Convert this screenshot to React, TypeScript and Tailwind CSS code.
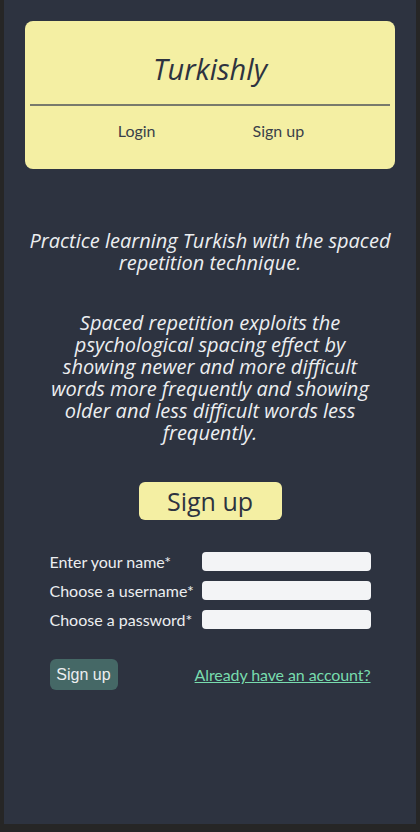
const Header = () => (
  <div className="flex h-[148px] flex-col rounded-lg bg-[#f4efa3] px-[5px]">
    <h1 className="mt-[28px] h-[40px] text-center font-['Open_Sans'] text-[29px] leading-[40px] italic text-[#2d3340]">
      Turkishly
    </h1>
    <div className="mt-[15px] h-[2px] bg-[#787a6c]" />
    <nav className="mt-[15px] flex justify-center gap-[97px] pl-[2px] font-['Lato'] text-[16px] leading-[20px] text-[#3a3f4a]">
      <a>Login</a>
      <a>Sign up</a>
    </nav>
  </div>
)

const Field = ({label, type}: {label: string; type: string}) => (
  <div className="flex h-[29px] items-center">
    <label className="w-[153px] font-['Lato'] text-[16px] text-[#eceef0]">{label}</label>
    <input type={type} className="h-[19px] w-[169px] rounded-[4px] bg-[#f3f4f6] outline-none" />
  </div>
)

export default function App() {
  return (
    <div className="h-[832px] bg-[#262626] px-[4px] pb-[8px]">
      <div className="flex h-full flex-col bg-[#2d3340] px-[21px] pt-[21px]">
        <Header />

        <p className="mt-[61px] text-center font-['Open_Sans'] text-[20px] leading-[22px] italic text-[#eceef0]">
          Practice learning Turkish with the spaced repetition technique.
        </p>
        <p className="mx-[22px] mt-[38px] text-center font-['Open_Sans'] text-[20px] leading-[22px] italic text-[#eceef0]">
          Spaced repetition exploits the psychological spacing effect by showing newer and more difficult words more
          frequently and showing older and less difficult words less frequently.
        </p>

        <div className="mt-[38px] flex justify-center">
          <button className="h-[38px] w-[143px] rounded-md bg-[#f4efa3] font-['Open_Sans'] text-[25px] leading-[38px] text-[#2d3340]">
            Sign up
          </button>
        </div>

        <form className="mt-[27px] w-[321px] self-center">
          <Field label="Enter your name*" type="text" />
          <Field label="Choose a username*" type="text" />
          <Field label="Choose a password*" type="password" />

          <div className="mt-[25px] flex items-center justify-between">
            <button type="button" className="h-[31px] w-[68px] rounded-md bg-[#456866] font-['Liberation_Sans'] text-[16px] text-[#eceef0]">
              Sign up
            </button>
            <a href="#" className="mt-[1px] font-['Lato'] text-[16px] tracking-[-0.1px] text-[#78dcae] underline">
              Already have an account?
            </a>
          </div>
        </form>
      </div>
    </div>
  )
}
